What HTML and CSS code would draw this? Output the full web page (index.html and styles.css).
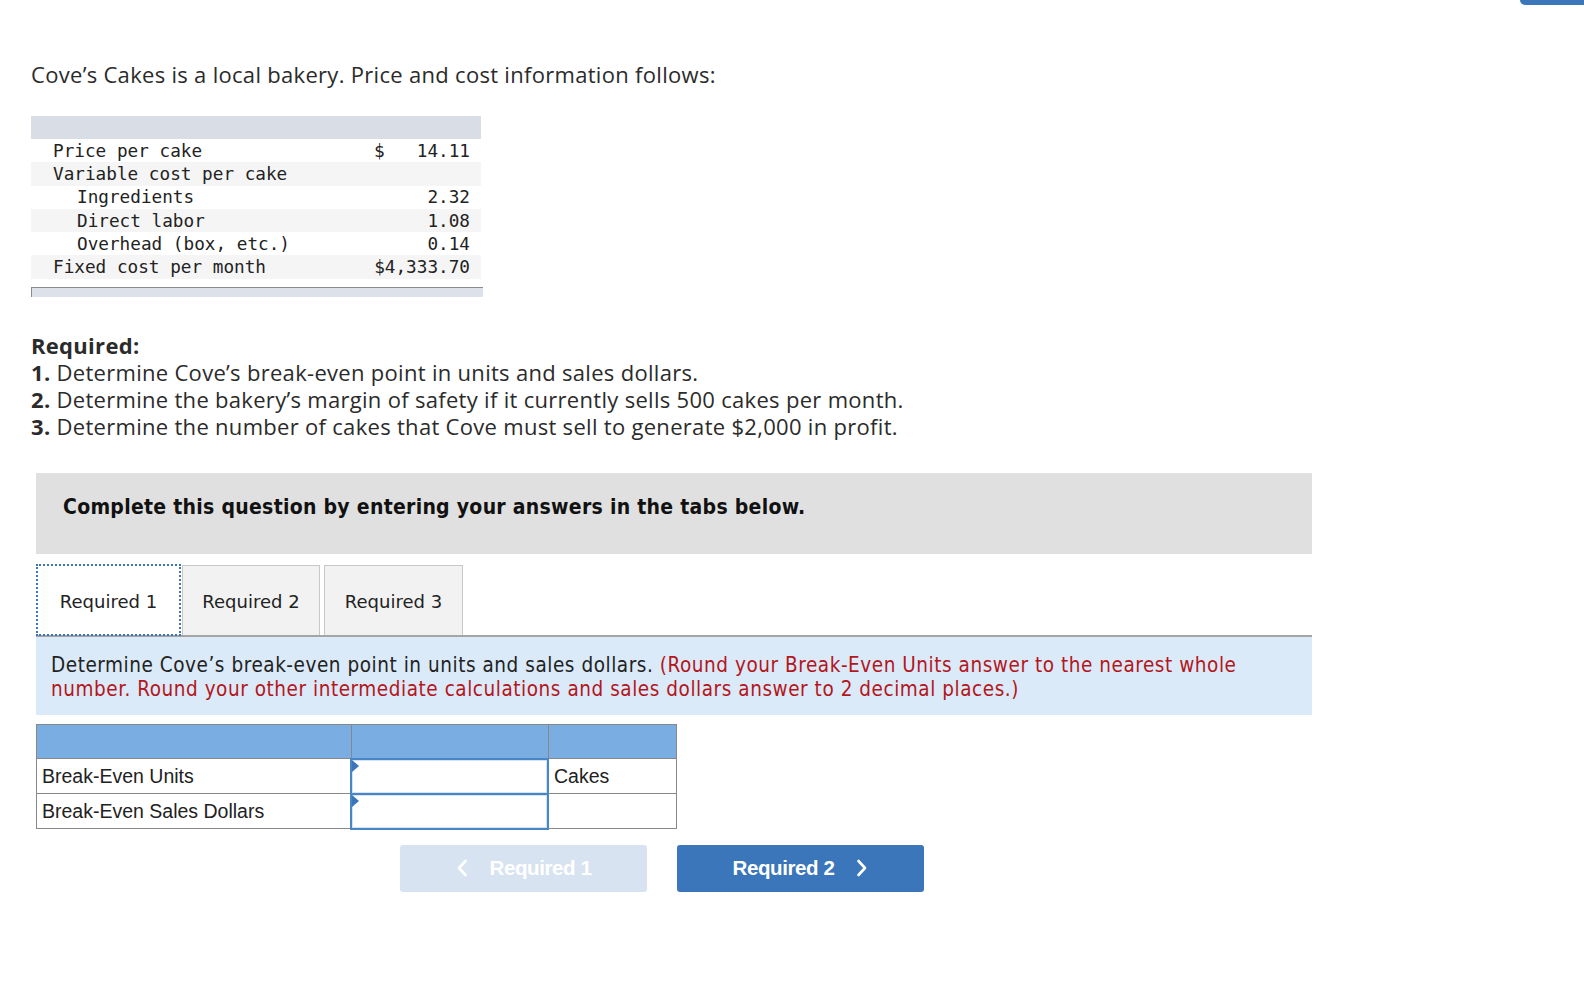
FILE: index.html
```html
<!DOCTYPE html>
<html>
<head>
<meta charset="utf-8">
<link rel="stylesheet" href="styles.css">
</head>
<body>
<div class="topbar"></div>
<main class="page">
  <p class="intro">Cove’s Cakes is a local bakery. Price and cost information follows:</p>

  <div class="datatable">
    <div class="dt-head"></div>
    <div class="dt-row"><span class="lbl">Price per cake</span><span class="amt"><span>$</span><span>14.11</span></span></div>
    <div class="dt-row alt"><span class="lbl">Variable cost per cake</span><span class="amt"></span></div>
    <div class="dt-row"><span class="lbl sub">Ingredients</span><span class="amt"><span></span><span>2.32</span></span></div>
    <div class="dt-row alt"><span class="lbl sub">Direct labor</span><span class="amt"><span></span><span>1.08</span></span></div>
    <div class="dt-row"><span class="lbl sub">Overhead (box, etc.)</span><span class="amt"><span></span><span>0.14</span></span></div>
    <div class="dt-row alt"><span class="lbl">Fixed cost per month</span><span class="amt"><span></span><span>$4,333.70</span></span></div>
    <div class="dt-foot"></div>
  </div>

  <div class="required">
    <p class="req-title">Required:</p>
    <p><b>1.</b> Determine Cove’s break-even point in units and sales dollars.</p>
    <p><b>2.</b> Determine the bakery’s margin of safety if it currently sells 500 cakes per month.</p>
    <p><b>3.</b> Determine the number of cakes that Cove must sell to generate $2,000 in profit.</p>
  </div>

  <section class="work">
    <div class="complete">Complete this question by entering your answers in the tabs below.</div>

    <div class="tabs">
      <div class="tab active">Required 1</div>
      <div class="tab t2">Required 2</div>
      <div class="tab t3">Required 3</div>
    </div>

    <div class="instr"><span class="line">Determine Cove’s break-even point in units and sales dollars. <span class="red">(Round your Break-Even Units answer to the nearest whole</span></span>
      <span class="line red">number. Round your other intermediate calculations and sales dollars answer to 2 decimal places.)</span></div>

    <table class="answers">
      <tr class="ahead"><th class="c1"></th><th class="c2"></th><th class="c3"></th></tr>
      <tr><td class="c1">Break-Even Units</td><td class="c2 inp"><span class="tri"></span></td><td class="c3">Cakes</td></tr>
      <tr><td class="c1">Break-Even Sales Dollars</td><td class="c2 inp"><span class="tri"></span></td><td class="c3"></td></tr>
    </table>

    <div class="navbtns">
      <div class="btn prev"><svg class="chev" width="12" height="18" viewBox="0 0 12 18"><polyline points="9.5,2 3,9 9.5,16" fill="none" stroke="#fff" stroke-width="2.6" stroke-linecap="round" stroke-linejoin="round"/></svg><span>Required 1</span></div>
      <div class="btn next"><span>Required 2</span><svg class="chev r" width="12" height="18" viewBox="0 0 12 18"><polyline points="2.5,2 9,9 2.5,16" fill="none" stroke="#fff" stroke-width="2.6" stroke-linecap="round" stroke-linejoin="round"/></svg></div>
    </div>
  </section>
</main>
</body>
</html>
```

FILE: styles.css
```css
html, body { margin: 0; padding: 0; background: #fff; }
body { font-family: "Open Sans", "Liberation Sans", sans-serif; color: #222; }

.topbar {
  position: absolute; top: 0; right: 0;
  width: 64px; height: 5px;
  background: #3a76b9;
  border-bottom-left-radius: 5px;
}

.page { padding: 59px 0 0 31px; }

.intro {
  margin: 0;
  font-size: 22px;
  line-height: 30px;
  letter-spacing: 0.3px;
  color: #2b2b2b;
}

.datatable {
  margin-top: 27px;
  width: 450px;
  font-family: "DejaVu Sans Mono", "Liberation Mono", monospace;
  font-size: 17.7px;
  color: #222;
}
.dt-head { height: 23px; background: #d9dde6; }
.dt-row { display: flex; height: 23.3px; align-items: center; background: #fff; }
.dt-row.alt { background: #f5f5f5; }
.lbl { padding-left: 22px; flex: 1; white-space: pre; }
.lbl.sub { padding-left: 46px; }
.amt {
  width: 96px;
  margin-right: 11px;
  display: flex;
  justify-content: space-between;
}
.dt-foot {
  margin-top: 8px;
  width: 451px; height: 9px;
  background: #dde1ea;
  border-top: 1px solid #8a8a8a;
  border-left: 1px solid #8a8a8a;
}

.required {
  margin-top: 35px;
  font-size: 22px;
  line-height: 27px;
  letter-spacing: 0.3px;
  color: #2b2b2b;
}
.required p { margin: 0; }
.req-title { font-weight: bold; }

.work { margin-left: 5px; width: 1276px; }

.complete {
  margin-top: 33px;
  height: 81px;
  box-sizing: border-box;
  background: #e0e0e0;
  padding: 22px 0 0 27px;
  font-family: "DejaVu Sans Condensed", "DejaVu Sans", sans-serif;
  font-weight: bold;
  font-size: 21px;
  letter-spacing: 0.28px;
  color: #111;
}

.tabs {
  margin-top: 11px;
  display: flex;
  border-bottom: 2px solid #a5a5a5;
  height: 70px;
  padding-left: 1px;
}
.tab {
  box-sizing: border-box;
  border: 1px solid #c8c8c8;
  border-bottom: none;
  background: #f2f2f2;
  font-family: "DejaVu Sans", Verdana, sans-serif;
  font-size: 18px;
  padding-top: 2px;
  color: #222;
  display: flex; align-items: center; justify-content: center;
}
.tab.active {
  width: 143px;
  background: #fff;
  border-color: #fff;
  outline: 2px dotted #3a76b9;
  outline-offset: -1px;
}
.tab.t2 { width: 138px; margin-left: 2px; }
.tab.t3 { width: 139px; margin-left: 4px; }

.instr {
  background: #dbeaf8;
  padding: 16px 15px 13px 15px;
  font-family: "DejaVu Sans Condensed", "DejaVu Sans", sans-serif;
  font-size: 20.5px;
  letter-spacing: 0.55px;
  line-height: 24.5px;
  color: #222;
}
.instr .line { display: block; white-space: nowrap; }
.red { color: #b3161c; }

.answers {
  margin-top: 9px;
  border-collapse: collapse;
  font-family: "Liberation Sans", Arial, sans-serif;
  font-size: 19.5px;
  color: #222;
}
.answers td, .answers th {
  border: 1px solid #888;
  padding: 0 0 0 5px;
  height: 33px;
  text-align: left;
  font-weight: normal;
}
.ahead th { background: #7aaee3; height: 33px; }
.c1 { width: 308px; }
.c2 { width: 190px; }
.c3 { width: 122px; }
.answers td.inp {
  position: relative;
  border: 2px solid #4a86c5;
  box-shadow: inset 0 0 0 1px #d4e3f3;
  background: #fff;
}
.tri {
  position: absolute; top: 0; left: 0;
  width: 0; height: 0;
  border-top: 6px solid transparent;
  border-bottom: 6px solid transparent;
  border-left: 7px solid #3a76b9;
}

.navbtns {
  margin-top: 15px;
  margin-left: 364px;
  display: flex;
  gap: 30px;
}
.btn {
  width: 247px; height: 47px;
  border-radius: 3px;
  display: flex; align-items: center; justify-content: center;
  font-family: "Liberation Sans", Arial, sans-serif;
  font-weight: bold;
  font-size: 20.5px;
  color: #fff;
  letter-spacing: -0.4px;
}
.btn.prev { background: #d7e3f1; }
.btn.next { background: #3a76b9; }
.chev { margin-right: 22px; }
.chev.r { margin-right: 0; margin-left: 22px; }
```
